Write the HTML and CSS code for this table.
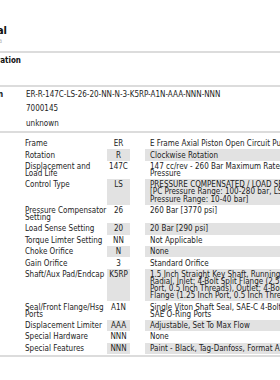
FILE: index.html
```html
<!DOCTYPE html>
<html>
<head>
<meta charset="utf-8">
<link rel="stylesheet" href="styles.css">
</head>
<body>
<div class="page">
  <div class="head">
    <h1 class="title">Technical</h1>
    <div class="sub">Pump data</div>
  </div>
  <div class="section"><div class="section-title">Configuration</div></div>
  <div class="info">
    <div class="info-label">Designation</div>
    <div class="info-values">
      <div class="info-line">ER-R-147C-LS-26-20-NN-N-3-K5RP-A1N-AAA-NNN-NNN</div>
      <div class="info-line">7000145</div>
      <div class="info-line">unknown</div>
    </div>
  </div>
  <div class="spec">
    <div class="row"><div class="lbl">Frame</div><div class="code">ER</div><div class="desc">E Frame Axial Piston Open Circuit Pump</div></div>
    <div class="row alt"><div class="lbl">Rotation</div><div class="code">R</div><div class="desc">Clockwise Rotation</div></div>
    <div class="row"><div class="lbl">Displacement and<br>Load Life</div><div class="code">147C</div><div class="desc">147 cc/rev - 260 Bar Maximum Rated<br>Pressure</div></div>
    <div class="row alt"><div class="lbl">Control Type</div><div class="code">LS</div><div class="desc">PRESSURE COMPENSATED / LOAD SENSE<br>[PC Pressure Range: 100-280 bar, LS<br>Pressure Range: 10-40 bar]</div></div>
    <div class="row"><div class="lbl">Pressure Compensator<br>Setting</div><div class="code">26</div><div class="desc">260 Bar [3770 psi]</div></div>
    <div class="row alt"><div class="lbl">Load Sense Setting</div><div class="code">20</div><div class="desc">20 Bar [290 psi]</div></div>
    <div class="row"><div class="lbl">Torque Limter Setting</div><div class="code">NN</div><div class="desc">Not Applicable</div></div>
    <div class="row alt"><div class="lbl">Choke Orifice</div><div class="code">N</div><div class="desc">None</div></div>
    <div class="row"><div class="lbl">Gain Orifice</div><div class="code">3</div><div class="desc">Standard Orifice</div></div>
    <div class="row alt"><div class="lbl">Shaft/Aux Pad/Endcap</div><div class="code">K5RP</div><div class="desc">1.5 Inch Straight Key Shaft, Running<br>Radial, Inlet: 4-Bolt Split Flange (2.5 Inch<br>Port, 0.5 Inch Threads), Outlet: 4-Bolt Split<br>Flange (1.25 Inch Port, 0.5 Inch Threads)</div></div>
    <div class="row"><div class="lbl">Seal/Front Flange/Hsg<br>Ports</div><div class="code">A1N</div><div class="desc">Single Viton Shaft Seal, SAE-C 4-Bolt Flange,<br>SAE O-Ring Ports</div></div>
    <div class="row alt"><div class="lbl">Displacement Limiter</div><div class="code">AAA</div><div class="desc">Adjustable, Set To Max Flow</div></div>
    <div class="row"><div class="lbl">Special Hardware</div><div class="code">NNN</div><div class="desc">None</div></div>
    <div class="row alt"><div class="lbl">Special Features</div><div class="code">NNN</div><div class="desc">Paint - Black, Tag-Danfoss, Format A</div></div>
  </div>
</div>
</body>
</html>
```
FILE: styles.css
```css
html, body {
  margin: 0;
  padding: 0;
  background: #ffffff;
}
body {
  font-family: "DejaVu Sans Condensed", "DejaVu Sans", sans-serif;
  font-size: 8px;
  color: #1c1c1c;
  overflow: hidden;
}
.page {
  width: 460px;
  margin-left: -60px;
  padding-top: 24px;
}
.head {
  border-bottom: 2px solid #dcdcdc;
  padding-bottom: 6px;
}
.title {
  width: 67px;
  margin: 0;
  text-align: right;
  font-size: 11px;
  line-height: 13px;
  font-weight: bold;
  color: #111111;
  white-space: nowrap;
}
.sub {
  width: 62px;
  text-align: right;
  font-size: 7px;
  line-height: 8px;
  color: #b8b8b8;
  white-space: nowrap;
}
.section {
  height: 29px;
  padding-top: 3px;
  border-bottom: 2px solid #dcdcdc;
  line-height: 9px;
}
.section-title {
  width: 81px;
  text-align: right;
  font-weight: bold;
  color: #111111;
  white-space: nowrap;
}
.info {
  display: flex;
  border-bottom: 2px solid #dcdcdc;
}
.info-label {
  width: 63px;
  margin-right: 23px;
  flex: none;
  text-align: right;
  font-weight: bold;
  line-height: 14.5px;
  padding-top: 0.5px;
  color: #111111;
  white-space: nowrap;
}
.info-values {
  display: flex;
  flex-direction: column;
  padding-top: 0.5px;
}
.info-line {
  line-height: 14.5px;
}
.spec {
  display: flex;
  flex-direction: column;
  padding: 5px 0 1px 85px;
  border-bottom: 2px solid #dcdcdc;
  line-height: 7.1px;
}
.row {
  display: grid;
  grid-template-columns: 82px 23px 300px;
}
.lbl,
.code,
.desc {
  padding: 2.15px 0;
  white-space: nowrap;
}
.code {
  text-align: center;
}
.desc {
  margin-left: 15px;
  padding-left: 5px;
}
.row.alt .code,
.row.alt .desc {
  background: #e2e2e2;
}
```
